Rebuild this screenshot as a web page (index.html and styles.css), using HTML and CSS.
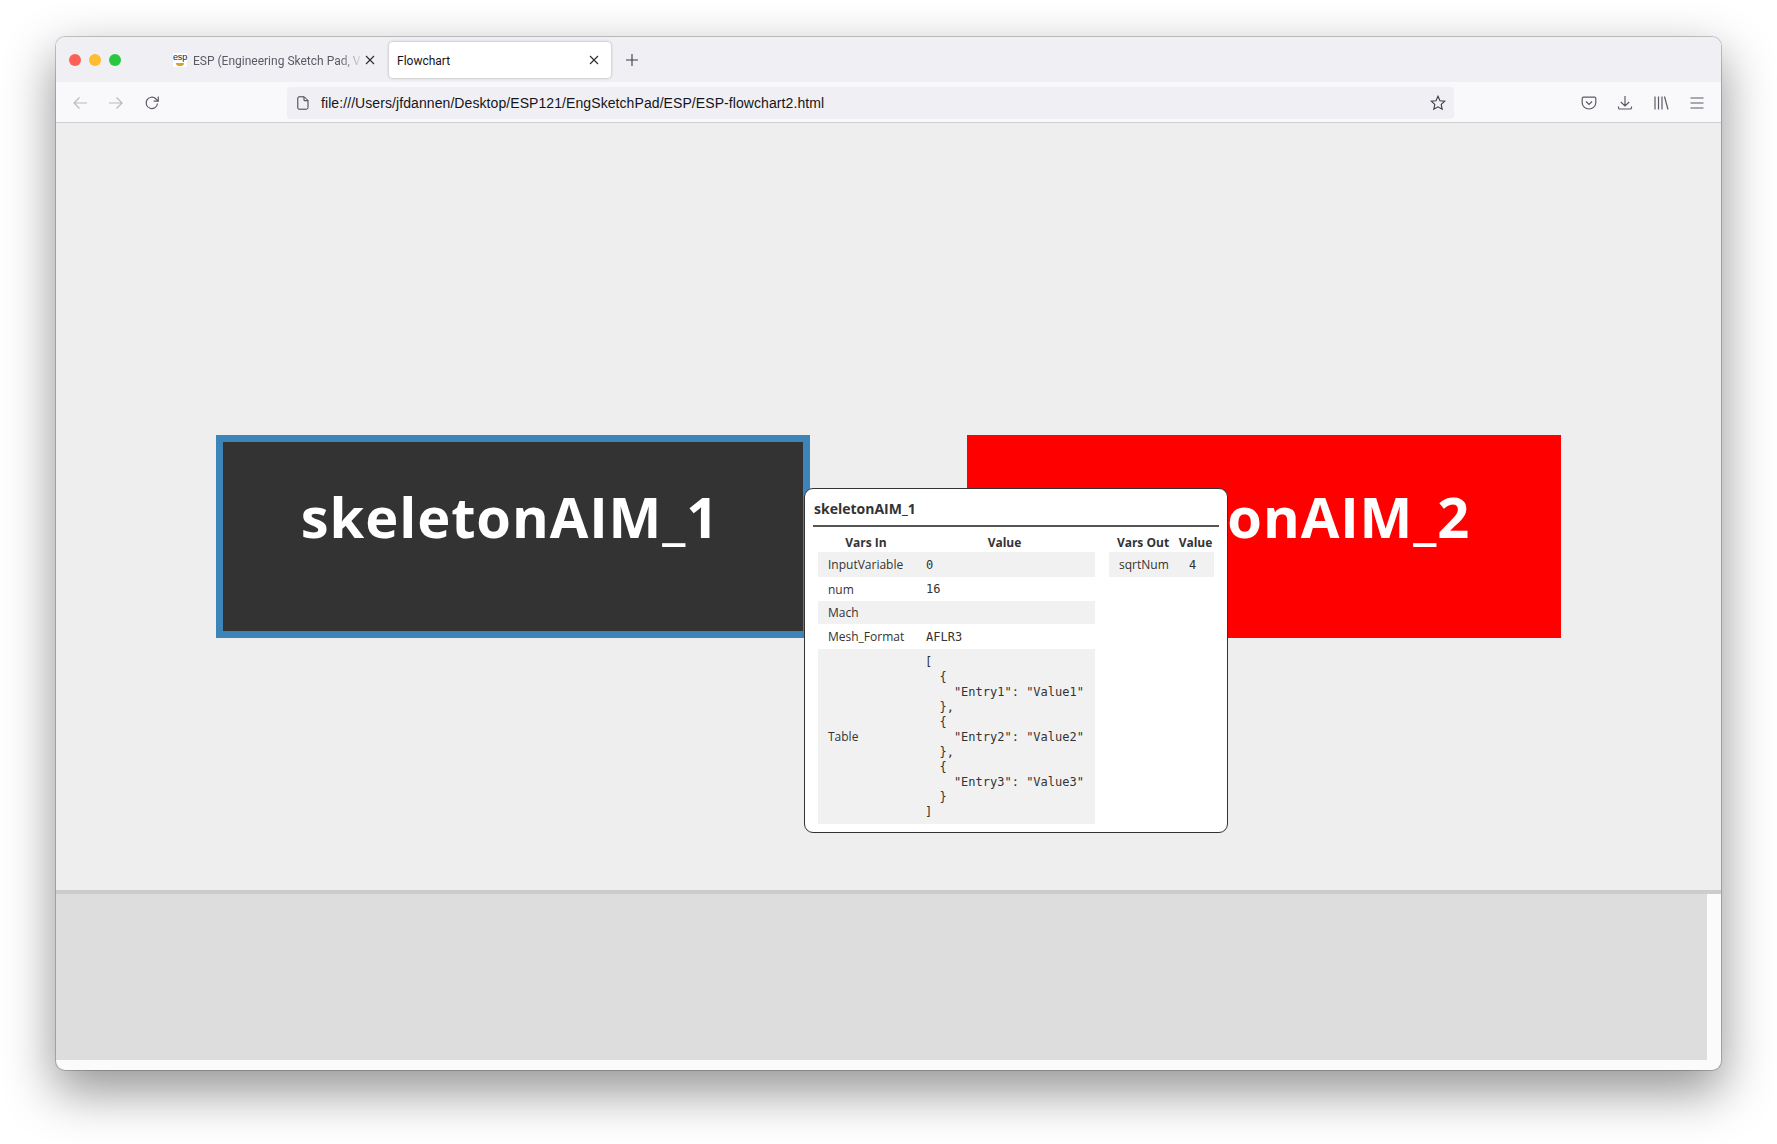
FILE: index.html
```html
<!DOCTYPE html>
<html>
<head>
  <meta http-equiv="CONTENT-TYPE" content="text/html; charset=UTF-8">
  <link rel="stylesheet" href="styles.css">
  <title>Flowchart</title>
</head>
<body>
  <div class="window">
    <div class="tabbar">
      <div class="lights">
        <span class="light red"></span>
        <span class="light yellow"></span>
        <span class="light green"></span>
      </div>
      <div class="tab">
        <span class="favicon"><span class="favicon-text">esp</span><span class="favicon-swoosh"></span></span>
        <span class="tab-title fade">ESP (Engineering Sketch Pad, V</span>
        <svg class="tab-close" viewBox="0 0 10 10"><path d="M1 1l8 8M9 1l-8 8"/></svg>
      </div>
      <div class="tab active">
        <span class="tab-title">Flowchart</span>
        <svg class="tab-close" viewBox="0 0 10 10"><path d="M1 1l8 8M9 1l-8 8"/></svg>
      </div>
      <svg class="new-tab" viewBox="0 0 12 12"><path d="M6 0v12M0 6h12"/></svg>
    </div>

    <div class="navbar">
      <svg class="nav-icon dim" viewBox="0 0 16 16"><path d="M15 8H2M7.500 2.500L2 8l5.500 5.500"/></svg>
      <svg class="nav-icon dim" viewBox="0 0 16 16"><path d="M1 8h13M8.500 2.500L14 8l-5.500 5.500"/></svg>
      <svg class="nav-icon" viewBox="0 0 16 16"><path d="M13.500 8.500A5.700 5.700 0 1 1 11.800 3.800L14 6"/><path d="M14.300 1.500V6.200H9.600"/></svg>
      <div class="urlbar">
        <svg class="file-icon" viewBox="0 0 12 14"><path d="M1.800.8h5.500L11 4.500v7.200c0 .8-.6 1.500-1.400 1.500H1.800c-.6 0-1-.5-1-1.200V2c0-.7.400-1.200 1-1.200z"/><path d="M7 1v3.700h4"/></svg>
        <span class="url">file:///Users/jfdannen/Desktop/ESP121/EngSketchPad/ESP/ESP-flowchart2.html</span>
        <svg class="star" viewBox="0 0 16 16"><path d="M8 1.200l2 4.500 4.800.5-3.600 3.200 1 4.800L8 11.800l-4.200 2.400 1-4.800L1.200 6.200 6 5.700z"/></svg>
      </div>
      <div class="toolbar">
        <svg class="nav-icon" viewBox="0 0 16 16"><path d="M2.500 2.200h11c.8 0 1.300.5 1.300 1.300v4.200c0 3.500-3 6.300-6.800 6.300S1.200 11.200 1.200 7.700V3.500c0-.8.500-1.300 1.300-1.300z"/><path d="M5 6.500l3 3 3-3"/></svg>
        <svg class="nav-icon" viewBox="0 0 16 16"><path d="M8 1v10M3.800 7L8 11l4.200-4M1.500 11.500v1.200c0 .9.500 1.300 1.300 1.300h10.400c.8 0 1.300-.4 1.300-1.300v-1.200"/></svg>
        <svg class="nav-icon" viewBox="0 0 16 16"><path d="M2 1.500v13M5.500 1.500v13M9 1.500v13M11.500 1.500l3.500 13"/></svg>
        <svg class="nav-icon last" viewBox="0 0 16 16"><path d="M1.500 3h13M1.500 8h13M1.500 13h13"/></svg>
      </div>
    </div>

    <div class="canvas">
      <div class="node selected">
        <span class="node-name">skeletonAIM_1</span>
      </div>
      <div class="node failed">
        <span class="node-name">skeletonAIM_2</span>
      </div>

      <div class="tooltip">
        <div class="tooltip-title">skeletonAIM_1</div>
        <div class="tooltip-tables">
          <table class="vars vars-in">
            <thead>
              <tr><th class="col-name">Vars In</th><th>Value</th></tr>
            </thead>
            <tbody>
              <tr class="h25 odd"><td>InputVariable</td><td class="mono">0</td></tr>
              <tr class="h24"><td>num</td><td class="mono">16</td></tr>
              <tr class="h23 odd"><td>Mach</td><td class="mono"></td></tr>
              <tr class="h25"><td>Mesh_Format</td><td class="mono">AFLR3</td></tr>
              <tr class="odd"><td>Table</td><td class="mono"><pre>[
  {
    "Entry1": "Value1"
  },
  {
    "Entry2": "Value2"
  },
  {
    "Entry3": "Value3"
  }
]</pre></td></tr>
            </tbody>
          </table>
          <table class="vars vars-out">
            <thead>
              <tr><th class="col-out">Vars Out</th><th>Value</th></tr>
            </thead>
            <tbody>
              <tr class="h25 odd"><td>sqrtNum</td><td class="mono num">4</td></tr>
            </tbody>
          </table>
        </div>
      </div>
    </div>

    <div class="bottom">
      <div class="bottom-panel"></div>
    </div>
  </div>
</body>
</html>
```

FILE: styles.css
```css
* {
  margin: 0;
  padding: 0;
  box-sizing: border-box;
}

body {
  width: 100%;
  height: 100vh;
  overflow: hidden;
  background: #fff;
  padding: 37px 56px 0;
  font-family: Roboto, "Liberation Sans", sans-serif;
}

.window {
  width: 1665px;
  height: 1033px;
  display: flex;
  flex-direction: column;
  border-radius: 9px;
  overflow: hidden;
  background: #fbfbfb;
  box-shadow: 0 20px 50px 2px rgba(0, 0, 0, 0.42), 0 0 0 1px rgba(0, 0, 0, 0.2);
}

/* tabs */
.tabbar {
  height: 45px;
  background: #f0f0f4;
  display: flex;
  align-items: center;
  flex-shrink: 0;
  padding-top: 1px;
}

.lights {
  display: flex;
  gap: 8px;
  padding-left: 13px;
  width: 117px;
}

.light {
  width: 12px;
  height: 12px;
  border-radius: 50%;
}

.red { background: #fe5f57; }
.yellow { background: #febc2e; }
.green { background: #28c840; }

.tab {
  width: 219px;
  height: 36px;
  display: flex;
  align-items: center;
  padding: 0 17px 0 0;
  font-size: 12px;
  color: #5b5b66;
}

.tab.active {
  background: #fff;
  color: #15141a;
  border-radius: 4px;
  box-shadow: 0 0 3px rgba(0, 0, 0, 0.3);
  padding-left: 8px;
  width: 222px;
  margin-left: -3px;
  padding-right: 12px;
}

.tab-title {
  flex: 1;
  padding-top: 1px;
  white-space: nowrap;
  overflow: hidden;
}

.fade {
  -webkit-mask-image: linear-gradient(to right, #000 85%, transparent 100%);
  mask-image: linear-gradient(to right, #000 85%, transparent 100%);
}

.tab:not(.active) .tab-title {
  margin-left: 6px;
}

.tab-close {
  width: 10px;
  height: 10px;
  flex-shrink: 0;
  fill: none;
  stroke: #2b2a33;
  stroke-width: 1.1;
}

.favicon {
  width: 14px;
  height: 14px;
  background: #fff;
  position: relative;
  flex-shrink: 0;
}

.favicon-text {
  display: block;
  font-family: "Liberation Sans", sans-serif;
  font-size: 9px;
  line-height: 9px;
  letter-spacing: -0.2px;
  color: #222;
  text-align: center;
}

.favicon-swoosh {
  position: absolute;
  left: 3px;
  top: 10px;
  width: 8px;
  height: 3px;
  border-radius: 0 0 4px 4px;
  background: #d9a02b;
}

.new-tab {
  width: 12px;
  height: 12px;
  margin-left: 15px;
  fill: none;
  stroke: #3b3a44;
  stroke-width: 1.1;
}

/* nav */
.navbar {
  height: 41px;
  background: #f9f9fb;
  border-bottom: 1px solid #cfcfd3;
  display: flex;
  align-items: center;
  padding: 2px 0 0 16px;
  flex-shrink: 0;
}

.nav-icon {
  width: 16px;
  height: 16px;
  margin-right: 20px;
  fill: none;
  stroke: #5b5b66;
  stroke-width: 1.2;
  flex-shrink: 0;
}

.nav-icon.dim {
  stroke: #b9b9bf;
}

.nav-icon.last {
  margin-right: 0;
}

.urlbar {
  width: 1167px;
  height: 32px;
  margin-left: 107px;
  flex-shrink: 0;
  background: #f0f0f4;
  border-radius: 4px;
  display: flex;
  align-items: center;
  padding: 0 8px 0 10px;
}

.file-icon {
  width: 12px;
  height: 14px;
  fill: none;
  stroke: #3b3a44;
  stroke-width: 1;
}

.url {
  flex: 1;
  margin-left: 12px;
  font-family: "Liberation Sans", sans-serif;
  font-size: 14px;
  letter-spacing: 0.08px;
  color: #15141a;
}

.star {
  width: 16px;
  height: 16px;
  fill: none;
  stroke: #3b3a44;
  stroke-width: 1.1;
}

.toolbar {
  display: flex;
  margin-left: 127px;
}

/* flowchart */
.canvas {
  position: relative;
  height: 771px;
  background: #eee;
  border-bottom: 4px solid #ccc;
  flex-shrink: 0;
  display: flex;
  gap: 157px;
  padding: 312px 0 0 160px;
}

.node {
  width: 594px;
  height: 203px;
  text-align: center;
  color: #fff;
  flex-shrink: 0;
  overflow: hidden;
}

.node.selected {
  background: #333;
  border: 7px solid #3d85b9;
}

.node.failed {
  background: #f00;
  padding: 7px;
}

.node-name {
  display: block;
  font-family: "Open Sans", sans-serif;
  font-weight: 700;
  font-size: 56px;
  line-height: 76px;
  margin: 36px 6px 0 0;
  letter-spacing: 0.9px;
}

.tooltip {
  position: absolute;
  left: 748px;
  top: 365px;
  width: 424px;
  height: 345px;
  background: #fff;
  border: 1px solid #333;
  border-radius: 9px;
  padding: 0 8px;
  font-family: "Open Sans", sans-serif;
  font-size: 12px;
  color: #333;
}

.tooltip-title {
  height: 38px;
  line-height: 38px;
  font-size: 14px;
  font-weight: 700;
  padding: 1px 0 0 1px;
  border-bottom: 2px solid #555;
}

.tooltip-tables {
  display: flex;
  align-items: flex-start;
  padding-left: 5px;
}

.vars {
  border-collapse: collapse;
  table-layout: fixed;
}

.vars-in {
  width: 277px;
  margin-right: 14px;
}

.vars-out {
  width: 105px;
}

.vars th {
  height: 25px;
  font-size: 12px;
  font-weight: 700;
  text-align: center;
  vertical-align: bottom;
  padding-bottom: 1px;
}

.vars-in th {
  padding-right: 2px;
}

.col-name {
  width: 98px;
}

.col-out {
  width: 68px;
}

.vars td {
  padding: 0 0 0 10px;
  vertical-align: middle;
  white-space: nowrap;
}

.odd td {
  background: #f1f1f1;
}

.h25 { height: 25px; }
.h24 { height: 24px; }
.h23 { height: 23px; }

.mono, pre {
  font-family: "DejaVu Sans Mono", monospace;
  font-size: 12px;
}

pre {
  line-height: 15px;
  padding: 6px 0 4px;
  margin-left: -1px;
}

.vars td.num {
  padding-left: 12px;
}

/* bottom panel */
.bottom {
  flex: 1;
  padding: 0 14px 10px 0;
}

.bottom-panel {
  height: 100%;
  background: #ddd;
}
```
